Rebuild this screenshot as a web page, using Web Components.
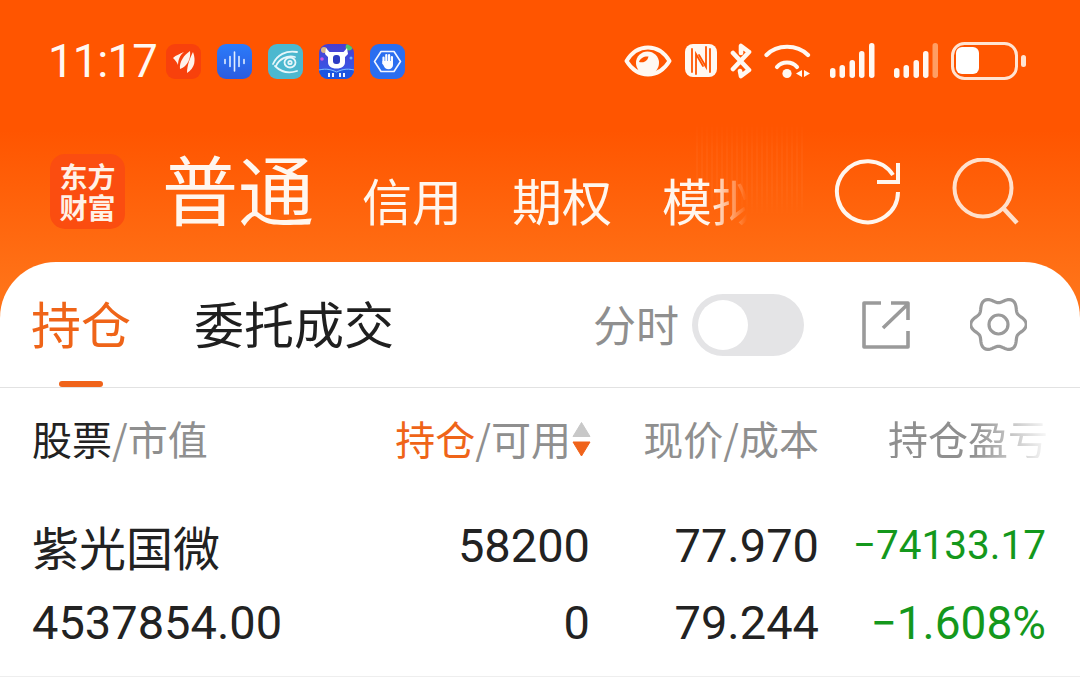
<!DOCTYPE html>
<html lang="zh"><head><meta charset="utf-8">
<style>
html,body{margin:0;padding:0}
body{width:1080px;height:679px;overflow:hidden;background:#fff;font-family:Roboto,"Noto Sans CJK SC",sans-serif}
</style></head>
<body>
<app-shell>
  <status-bar slot="status"></status-bar>
  <account-bar slot="account"></account-bar>
  <position-panel slot="panel">
    <panel-tabs></panel-tabs>
    <holding-table></holding-table>
  </position-panel>
</app-shell>
<script>
function mk(name,html){
  customElements.define(name,class extends HTMLElement{
    constructor(){super();this.attachShadow({mode:'open'}).innerHTML=html;}
  });
}
mk('app-shell',`<style>
:host{display:flex;flex-direction:column;width:1080px;height:679px;overflow:hidden;
background:linear-gradient(180deg,#ff5500 0,#ff5500 130px,#ff7318 290px)}
</style><slot name="status"></slot><slot name="account"></slot><slot name="panel"></slot>`);

mk('status-bar',`<style>
:host{display:flex;align-items:flex-start;height:122px;padding:43px 53px 0 48px;box-sizing:border-box;color:#fff8f2}
.time{font:400 45.500px/38px Roboto,sans-serif;letter-spacing:-.9px;width:118px;height:38px}
.apps{display:flex;gap:16px;margin-top:1px}
.app{width:35px;height:35px;border-radius:9px;display:block;overflow:hidden}
.sys{margin-left:auto;display:flex;align-items:flex-start}
svg{display:block}
</style>
<div class="time">11:17</div>
<div class="apps">
<svg class="app" viewBox="0 0 35 35"><rect width="35" height="35" fill="#f8410c"/><path d="M7 14C10 11 14 10 18 8 14 11 12 16 12 21 11 18 9 16 7 14Z" fill="#fff2ea"/><path d="M14 25C13 18 18 11 24 7 25 14 22 22 14 25Z" fill="#fff2ea"/><path d="M21 29C21 21 24 14 27 8 30 16 29 24 21 29Z" fill="#fff2ea"/></svg>
<svg class="app" viewBox="0 0 35 35"><defs><linearGradient id="bl" x1="0" y1="0" x2="0" y2="1"><stop offset="0" stop-color="#2b7bfa"/><stop offset="1" stop-color="#2b5ce0"/></linearGradient></defs><rect width="35" height="35" fill="url(#bl)"/><g stroke="#e2eeff" stroke-width="1.600" stroke-linecap="round"><path d="M8 15.500v4M13 12.500v10M17.500 8v19M22 12.500v10M27 15.500v4"/></g></svg>
<svg class="app" viewBox="0 0 35 35"><rect width="35" height="35" fill="#4cb8cf"/><g fill="none" stroke="#e6f6fa" stroke-width="1.800" stroke-linecap="round"><path d="M5 20C9 11 18 6 29 8"/><path d="M8 22C11 15 19 11 27 13"/><path d="M7 22C12 27 20 30 29 27"/><ellipse cx="22" cy="18.500" rx="5.500" ry="5"/><circle cx="22" cy="18.500" r="1.700"/></g></svg>
<svg class="app" viewBox="0 0 35 35"><defs><linearGradient id="pu" x1="0" y1="0" x2="0" y2="1"><stop offset="0" stop-color="#4a3ed0"/><stop offset=".7" stop-color="#3a55e4"/><stop offset="1" stop-color="#2a62e6"/></linearGradient></defs><rect width="35" height="35" fill="url(#pu)"/><circle cx="5" cy="6" r="3" fill="#d9b98a"/><circle cx="30" cy="3" r="3.400" fill="#52c46a"/><circle cx="3" cy="15" r="1.800" fill="#d05ae0"/><circle cx="32" cy="14" r="1.500" fill="#6ab0ff"/><path d="M7 4l3.500 4h14L28 4l1 6-3 3v5c0 4-3 6.500-8.500 6.500S9 22 9 18v-5l-3-3Z" fill="#fff"/><rect x="14" y="11" width="7" height="9" rx="3" fill="#2c3cc4"/><path d="M0 26c8-2 13 0 17.500 2C22 26 27 24 35 26v9H0Z" fill="#1d55e0"/><path d="M0 26c8-2 13 0 17.500 2C22 26 27 24 35 26" fill="none" stroke="#7fc0ff" stroke-width="1"/><g fill="#eef4ff"><rect x="9" y="29" width="2" height="4"/><rect x="13" y="29" width="2" height="4"/><rect x="20" y="29" width="2" height="4"/><rect x="24" y="29" width="2" height="4"/></g></svg>
<svg class="app" viewBox="0 0 35 35"><rect width="35" height="35" fill="#2a6ef0"/><path d="M11 7.500h13l6.500 10-6.500 10H11L4.500 17.500Z" fill="none" stroke="#f2f6ff" stroke-width="1.600" stroke-linejoin="round"/><g stroke="#fbfdff" stroke-width="2.200" stroke-linecap="round"><path d="M13.500 13.500v6M16.300 11v8M19.100 11v8M21.900 13v7"/></g><path d="M12.500 17h10.500v4c0 2.500-2 4.200-4.500 4.200-2.400 0-3.400-1-4.400-2.700l-1.600-3Z" fill="#fbfdff"/></svg>
</div>
<div class="sys">
<svg width="48" height="36" viewBox="0 0 48 36"><path d="M2.500 18C8 9 15.500 4.500 24 4.500S40 9 45.500 18C40 27 32.500 31.500 24 31.500S8 27 2.500 18Z" fill="none" stroke="#fff8f2" stroke-width="4" stroke-linejoin="round"/><circle cx="23.500" cy="20" r="11.500" fill="#fff8f2"/><path d="M15 19c2 .5 4 .5 6-.5s3-3 3.500-5c-4-.5-8.500 1.500-9.500 5.500Z" fill="#ff5500"/></svg>
<svg width="34" height="36" viewBox="0 0 34 36" style="margin-left:12px"><rect x="1" y="1" width="32" height="33" rx="8" fill="#fff8f2"/><g fill="none" stroke="#ff5500" stroke-width="1.800" stroke-linecap="round"><path d="M8 6v23M26 6v23"/><path d="M12 31V11l7 12M22 4v20l-7-12"/></g></svg>
<svg width="24" height="36" viewBox="0 0 24 36" style="margin-left:11px"><path d="M4 10l16 17-8 6-1-5M4 26L20 9l-8-6v7" fill="none" stroke="#fff8f2" stroke-width="4.600" stroke-linejoin="round" stroke-linecap="round"/></svg>
<svg width="47" height="36" viewBox="0 0 47 36" style="margin-left:11px"><g fill="none" stroke="#fff8f2" stroke-width="4.200" stroke-linecap="round"><path d="M2.500 12C13 1 33 1 44 12"/><path d="M13 24C18 18 28 18 33 24"/></g><circle cx="23" cy="30.500" r="4.600" fill="#fff8f2"/><path d="M38 27L32 30.500 38 34ZM40 27L46 30.500 40 34Z" fill="#fff8f2"/></svg>
<svg width="46" height="36" viewBox="0 0 46 36" style="margin-left:18px"><g fill="#fff8f2"><rect x="1" y="25" width="5.500" height="10" rx="2.700"/><rect x="10.500" y="22" width="5.500" height="13" rx="2.700"/><rect x="20.500" y="17" width="5.500" height="18" rx="2.700"/><rect x="30" y="8" width="5.500" height="27" rx="2.700"/><rect x="40" y="0" width="5.500" height="35" rx="2.700"/></g></svg>
<svg width="46" height="36" viewBox="0 0 46 36" style="margin-left:18px"><g fill="#fff8f2"><rect x="1" y="25" width="5.500" height="10" rx="2.700"/><rect x="10.500" y="22" width="5.500" height="13" rx="2.700"/><rect x="20.500" y="17" width="5.500" height="18" rx="2.700"/><rect x="30" y="8" width="5.500" height="27" rx="2.700"/></g><rect x="39.500" y="0" width="5.500" height="35" rx="2.700" fill="#ff9e63"/></svg>
<svg width="76" height="38" viewBox="0 0 76 38" style="margin:-1px 0 0 12px"><rect x="1.500" y="1.500" width="64" height="35" rx="12" fill="none" stroke="#ffe4d2" stroke-width="3"/><rect x="5" y="5" width="23" height="27" rx="6" fill="#fff"/><rect x="70" y="13" width="5" height="12" rx="2.500" fill="#ffe4d2"/></svg>
</div>`);

mk('account-bar',`<style>
:host{display:flex;align-items:flex-start;height:140px;padding:32px 0 0 50px;box-sizing:border-box;color:#fff6ee;font-family:"Noto Sans CJK SC",sans-serif;position:relative}
.logo{width:75px;height:75px;border-radius:15px;background:#fb4d10;color:#fff1e6;font:700 28px/31px "Noto Sans CJK SC",sans-serif;display:flex;align-items:center;justify-content:center;text-align:center;flex:none}
.main{font-weight:400;font-size:76px;line-height:76px;margin:-5px 0 0 37px;flex:none}
.tabs{display:flex;gap:50px;font-weight:400;font-size:50px;line-height:70px;margin-left:48px;padding-top:10px;flex:none;width:385px;
-webkit-mask-image:linear-gradient(90deg,#000 0,#000 350px,transparent 385px);mask-image:linear-gradient(90deg,#000 0,#000 350px,transparent 385px)}
.tabs span{flex:none}
.ghost{position:absolute;left:696px;top:0;width:110px;height:96px;background:repeating-linear-gradient(90deg,rgba(255,255,255,.035) 0 2px,transparent 2px 5px);-webkit-mask-image:linear-gradient(180deg,transparent,#000 30%,#000 70%,transparent);mask-image:linear-gradient(180deg,transparent,#000 30%,#000 70%,transparent)}
svg{display:block}
</style>
<div class="logo">东方<br>财富</div>
<div class="main">普通</div>
<div class="tabs"><span>信用</span><span>期权</span><span>模拟</span></div>
<div class="ghost"></div>
<svg width="68" height="68" viewBox="0 0 68 68" style="position:absolute;left:834px;top:37px" fill="none" stroke="#fff6ee" stroke-width="4"><path d="M64 33A30.500 30.500 0 1 1 59 16"/><path d="M64 4V23H43"/></svg>
<svg width="68" height="68" viewBox="0 0 68 68" style="position:absolute;left:952px;top:36px" fill="none" stroke="#ffe0cc" stroke-width="4"><circle cx="31" cy="30" r="28.500"/><path d="M52 51l13 14" stroke-width="4.500"/></svg>
`);

mk('position-panel',`<style>
:host{display:block;background:#fff;border-radius:56px 56px 0 0;flex:1;overflow:hidden}
</style><slot></slot>`);

const gear=(()=>{let d='';const N=120;for(let i=0;i<N;i++){const t=i/N*2*Math.PI,r=24.800+3*Math.cos(6*t);d+=(i?'L':'M')+(28.5+r*Math.cos(t)).toFixed(2)+' '+(28.5+r*Math.sin(t)).toFixed(2);}return d+'Z';})();
mk('panel-tabs',`<style>
:host{display:flex;align-items:center;height:126px;box-sizing:border-box;border-bottom:1px solid #e2e2e2;padding:0 53px 0 31px;font-family:"Noto Sans CJK SC",sans-serif;position:relative}
.t{font-size:50px;line-height:60px;font-weight:400;color:#1f1f1f;flex:none;margin-bottom:5px}
.on{color:#ef6418}
.bar{position:absolute;left:59px;bottom:0;width:44px;height:6px;border-radius:3px;background:#f0631a}
.t+.t{margin-left:63px}
.lbl{margin-left:auto;font-size:43px;font-weight:400;color:#8f8f8f;margin-bottom:3px}
.sw{width:112px;height:62px;border-radius:31px;background:#e4e4e6;margin-left:13px;display:flex;align-items:center;padding-left:6px;box-sizing:border-box;margin-bottom:-1px;flex:none}
.sw i{display:block;width:50px;height:50px;border-radius:50%;background:#fff}
svg{display:block;flex:none}
</style>
<div class="t on">持仓</div><div class="t">委托成交</div>
<div class="bar"></div>
<div class="lbl">分时</div>
<div class="sw"><i></i></div>
<svg width="48" height="50" viewBox="0 0 48 50" style="margin-left:58px" fill="none" stroke="#9a9a9a" stroke-width="3.600" stroke-linejoin="round"><path d="M19 3H2V47H46V31"/><path d="M21 28L46 4M29 3H46V20"/></svg>
<svg width="57" height="57" viewBox="0 0 57 57" style="margin-left:60px" fill="none" stroke="#9a9a9a" stroke-width="3.200"><path d="${gear}"/><circle cx="28.500" cy="28.500" r="9.500"/></svg>`);

mk('holding-table',`<style>
:host{display:grid;grid-template-columns:1fr 229px 229px 227px;padding:0 34px 0 32px;font-family:Roboto,"Noto Sans CJK SC",sans-serif;color:#212121;height:289px;box-sizing:border-box;border-bottom:1px solid #eee;grid-template-rows:119px 77px 77px;align-content:start}
.h{font-family:"Noto Sans CJK SC",sans-serif;font-weight:400;font-size:40px;color:#8f8f8f;display:flex;align-items:center;justify-content:flex-end;line-height:1;padding-bottom:19px;white-space:nowrap}
.h.l{justify-content:flex-start}
.k{color:#222}.o{color:#ef6418}
.f{-webkit-mask-image:linear-gradient(90deg,#000 0,#000 85px,rgba(0,0,0,.05) 160px);mask-image:linear-gradient(90deg,#000 0,#000 85px,rgba(0,0,0,.05) 160px);width:160px;margin-right:-2px}
.c{font-size:47px;line-height:1;display:flex;align-items:center;justify-content:flex-end;font-weight:400;color:#222;white-space:nowrap}
.c.l{justify-content:flex-start}
.n{font-family:"Noto Sans CJK SC",sans-serif}
.g{color:#14981c;font-size:46px}
.s{font-size:40.500px}
.arr{display:block;margin-right:-1px;flex:none}
</style>
<div class="h l"><span class="k">股票</span><span>/市值</span></div>
<div class="h"><span class="o">持仓</span><span>/可用</span><svg class="arr" width="20" height="38" viewBox="0 0 20 38"><path d="M10.500 3.500l8.500 14H2Z" fill="#c8c8c8" stroke="#c8c8c8" stroke-linejoin="round"/><path d="M2 23h17l-8.500 14Z" fill="#f0631a" stroke="#f0631a" stroke-linejoin="round"/></svg></div>
<div class="h">现价/成本</div>
<div class="h"><span class="f">持仓盈亏</span></div>
<div class="c l n">紫光国微</div><div class="c">58200</div><div class="c">77.970</div><div class="c g s">−74133.17</div>
<div class="c l">4537854.00</div><div class="c">0</div><div class="c">79.244</div><div class="c g">−1.608%</div>`);
</script>
</body></html>
